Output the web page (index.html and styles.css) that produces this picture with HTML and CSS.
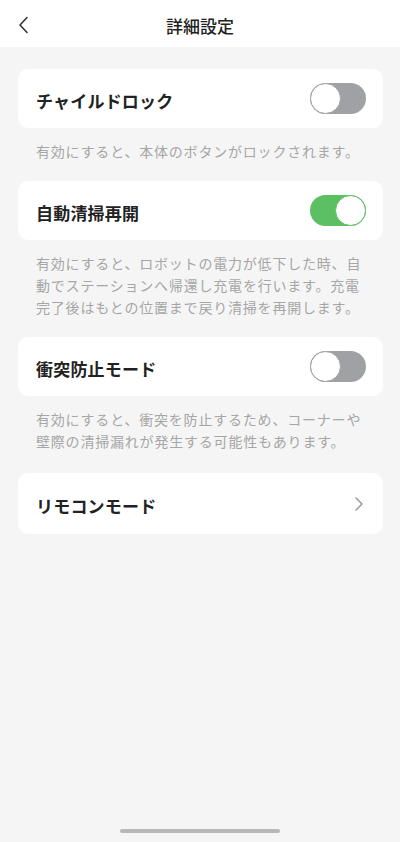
FILE: index.html
```html
<!DOCTYPE html>
<html lang="ja">
<head>
    <meta charset="UTF-8">
    <meta name="viewport" content="width=device-width, initial-scale=1.0">
    <title>詳細設定</title>
    <link rel="stylesheet" href="styles.css">
</head>
<body>

    <header class="top-bar">
        <span class="back">
            <svg width="12" height="18" viewBox="0 0 12 18">
                <path d="M9 1.5 L2 9 L9 16.5" fill="none" stroke="#333" stroke-width="1.6" stroke-linecap="round" stroke-linejoin="round"/>
            </svg>
        </span>
        <h1>詳細設定</h1>
    </header>

    <main class="settings">
        <div class="card">
            <span class="card-title">チャイルドロック</span>
            <span class="toggle"></span>
        </div>
        <p class="desc">有効にすると、本体のボタンがロックされます。</p>

        <div class="card">
            <span class="card-title">自動清掃再開</span>
            <span class="toggle on"></span>
        </div>
        <p class="desc">有効にすると、ロボットの電力が低下した時、自動でステーションへ帰還し充電を行います。充電完了後はもとの位置まで戻り清掃を再開します。</p>

        <div class="card">
            <span class="card-title">衝突防止モード</span>
            <span class="toggle"></span>
        </div>
        <p class="desc last">有効にすると、衝突を防止するため、コーナーや壁際の清掃漏れが発生する可能性もあります。</p>

        <div class="card tall">
            <span class="card-title">リモコンモード</span>
            <svg class="arrow" width="10" height="16" viewBox="0 0 10 16">
                <path d="M2 2 L8 8 L2 14" fill="none" stroke="#9a9a9a" stroke-width="1.5" stroke-linecap="round" stroke-linejoin="round"/>
            </svg>
        </div>
    </main>

    <div class="home-bar"></div>

</body>
</html>
```

FILE: styles.css
```css
body {
    margin: 0;
    height: 842px;
    background-color: #f5f5f5;
    font-family: "Noto Sans CJK JP", "Noto Sans", sans-serif;
    color: #222;
    display: flex;
    flex-direction: column;
}

.top-bar {
    height: 47px;
    box-sizing: border-box;
    padding-top: 4px;
    background-color: #fff;
    display: flex;
    align-items: center;
    justify-content: center;
    position: relative;
}

.top-bar h1 {
    margin: 0;
    font-size: 17px;
    font-weight: 500;
    color: #222;
}

.back {
    position: absolute;
    left: 18px;
    top: 16px;
    display: flex;
}

.settings {
    flex: 1;
    padding: 22px 17px 0 18px;
}

.card {
    height: 59px;
    box-sizing: border-box;
    background-color: #fff;
    border-radius: 10px;
    display: flex;
    align-items: center;
    justify-content: space-between;
    padding: 0 17px 0 18px;
}

.card.tall {
    height: 61px;
    padding-right: 19px;
}

.card-title {
    font-size: 17px;
    font-weight: 700;
    letter-spacing: 0.2px;
    padding-top: 4px;
}

.toggle {
    width: 56px;
    height: 31px;
    border-radius: 16px;
    background-color: #9fa1a4;
    position: relative;
    box-sizing: border-box;
}

.toggle::after {
    content: "";
    position: absolute;
    left: 0;
    top: 0;
    width: 31px;
    height: 31px;
    box-sizing: border-box;
    border-radius: 50%;
    background-color: #fff;
    border: 1.5px solid #9fa1a4;
}

.toggle.on {
    background-color: #5dbf63;
}

.toggle.on::after {
    left: auto;
    right: 0;
    border-color: #5dbf63;
}

.desc {
    margin: 0;
    padding: 12px 18px 19px 18px;
    font-size: 14px;
    line-height: 22px;
    letter-spacing: 0.8px;
    color: #a6a6a6;
}

.desc.last {
    padding-bottom: 21px;
}

.home-bar {
    width: 160px;
    height: 4px;
    border-radius: 2px;
    background-color: #b8b8b8;
    margin: 0 auto 9px auto;
}
```
